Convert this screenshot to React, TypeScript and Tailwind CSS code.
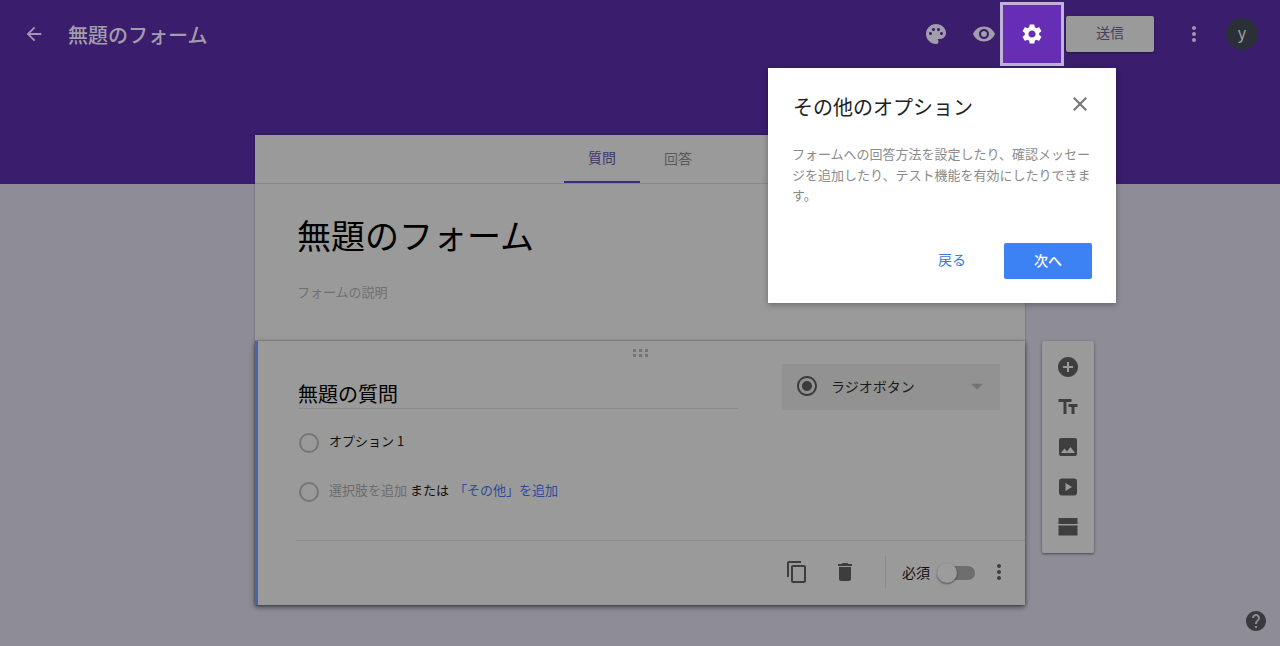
import {
  MdAddCircle,
  MdArrowBack,
  MdArrowDropDown,
  MdClose,
  MdContentCopy,
  MdDelete,
  MdHelp,
  MdImage,
  MdMoreVert,
  MdPalette,
  MdRadioButtonChecked,
  MdRemoveRedEye,
  MdSettings,
  MdTextFields,
} from "react-icons/md";

const font = "font-['Noto_Sans_CJK_JP','Liberation_Sans',sans-serif]";

// 質問カードの選択肢の丸
const RadioCircle = () => (
  <span className="w-5 h-5 rounded-full border-2 border-[#767676] shrink-0" />
);

const DragDots = () => (
  <div className="grid grid-cols-3 gap-[2px] w-[16px] mx-auto -translate-x-px">
    {[0, 1, 2, 3, 4, 5].map((i) => (
      <span key={i} className="w-[3px] h-[3px] bg-[#757575]" />
    ))}
  </div>
);

// 動画アイコン（角丸＋再生マーク）
const VideoIcon = () => (
  <svg width="24" height="24" viewBox="0 0 24 24" fill="currentColor">
    <path fillRule="evenodd" d="M6 3.5h12a3 3 0 0 1 3 3v11a3 3 0 0 1-3 3H6a3 3 0 0 1-3-3v-11a3 3 0 0 1 3-3zM9.5 8v8l6.5-4z" />
  </svg>
);

// セクションアイコン
const SectionIcon = () => (
  <svg width="24" height="24" viewBox="0 0 24 24" fill="currentColor">
    <rect x="2.5" y="3" width="19" height="6" />
    <rect x="2.5" y="10.5" width="19" height="10" />
  </svg>
);

const TopBar = () => (
  <div className="h-[68px] flex items-center">
    <MdArrowBack size={22} className="ml-[23px] text-[#a396b4]" />
    <h1 className="ml-[23px] mt-[1px] text-[20px] font-medium text-[#a39cae] leading-none">無題のフォーム</h1>

    <div className="ml-auto flex items-center">
      <MdPalette size={24} className="text-[#a29cac]" />
      <MdRemoveRedEye size={24} className="ml-[24px] text-[#a29cac]" />
      <div className="ml-[4px] w-[64px] h-[64px] border-[3px] border-[#bfb3d6] bg-[#652eb4] flex items-center justify-center">
        <MdSettings size={24} className="text-white" />
      </div>
      <button className="ml-[2px] w-[88px] h-[36px] pb-[3px] bg-[#9a9a9a] rounded-[2px] text-[14px] text-[#45405a] shadow-[0_1px_2px_rgba(0,0,0,0.4)]">
        送信
      </button>
      <MdMoreVert size={24} className="ml-[28px] text-[#a396b4]" />
      <div className="ml-[20px] mr-[22px] w-8 h-8 pb-[5px] rounded-full bg-[#2b3038] text-[#a0a0a0] text-[16px] flex items-center justify-center">
        y
      </div>
    </div>
  </div>
);

const FormHeader = () => (
  <div className="h-[206px] shrink-0 border-b border-[#878787]">
    <div className="h-[49px] border-b border-[#888888] flex justify-center">
      <div className="w-[76px] h-[48px] pb-[2px] border-b-2 border-[#3f2a78] flex items-center justify-center text-[14px] text-[#40356e]">
        質問
      </div>
      <div className="w-[76px] h-[48px] pb-[2px] flex items-center justify-center text-[14px] text-[#5a5a5a]">
        回答
      </div>
    </div>
    <div className="pl-[42px] pt-[27px]">
      <h2 className="text-[34px] leading-[48px] text-black">無題のフォーム</h2>
      <p className="mt-[24px] text-[13px] leading-[18px] text-[#707070]">フォームの説明</p>
    </div>
  </div>
);

const QuestionCard = () => (
  <div className="h-[264px] border-l-[3px] border-[#4a64a8] shadow-[0_2px_5px_rgba(0,0,0,0.55)] flex flex-col">
    <div className="pt-[8px] h-[24px]">
      <DragDots />
    </div>
    <div className="pl-[40px] pr-[25px] flex items-start">
      <div className="w-[440px] mt-[15px] h-[29px] border-b border-[#8a8a8a] text-[20px] font-normal leading-[28px] text-black">
        無題の質問
      </div>
      <div className="ml-auto -mt-[1px] w-[218px] h-[46px] pb-[2px] bg-[#929292] flex items-center pl-[13px] pr-[9px]">
        <MdRadioButtonChecked size={24} className="text-[#3b3b3b]" />
        <span className="ml-[12px] text-[14px] text-[#1c1c1c]">ラジオボタン</span>
        <MdArrowDropDown size={28} className="ml-auto text-[#727272]" />
      </div>
    </div>
    <div className="pl-[41px] mt-[8px] h-[50px] flex items-center gap-[10px]">
      <RadioCircle />
      <span className="-mt-[4px] text-[13px] text-[#111]">オプション 1</span>
    </div>
    <div className="pl-[41px] h-[47px] flex items-center gap-[10px] text-[13px]">
      <RadioCircle />
      <span className="-mt-[4px] text-[#6c6c6c]">
        選択肢を追加 <span className="text-[#111]">または</span>
      </span>
      <span className="-mt-[4px] -ml-[5px] text-[#2d4a99]">「その他」を追加</span>
    </div>
    <div className="mt-auto ml-[38px] h-[65px] pb-[2px] border-t border-[#8a8a8a] flex items-center justify-end pr-[14px]">
      <MdContentCopy size={24} className="text-[#3d3d3d]" />
      <MdDelete size={24} className="ml-[24px] text-[#3d3d3d]" />
      <span className="ml-[28px] w-px h-[32px] bg-[#8a8a8a]" />
      <span className="ml-[16px] text-[14px] text-[#111]">必須</span>
      <div className="ml-[9px] relative w-[36px] h-[14px] mt-[2px] rounded-full bg-[#6e6e6e]">
        <span className="absolute -left-[2px] -top-[3px] w-5 h-5 rounded-full bg-[#9c9c9c] shadow-[0_1px_2px_rgba(0,0,0,0.5)]" />
      </div>
      <MdMoreVert size={24} className="ml-[12px] text-[#3d3d3d]" />
    </div>
  </div>
);

const SideToolbar = () => (
  <div className="ml-[17px] w-[52px] h-[212px] mt-[206px] bg-[#9a9a9a] rounded-[2px] shadow-[0_1px_3px_rgba(0,0,0,0.5)] flex flex-col items-center pt-[14px] gap-[16px] text-[#3e3e3e]">
    <MdAddCircle size={24} />
    <MdTextFields size={24} />
    <MdImage size={24} />
    <VideoIcon />
    <SectionIcon />
  </div>
);

const OptionsPopover = () => (
  <div className="absolute left-[768px] top-[68px] w-[348px] h-[235px] bg-white shadow-[0_2px_6px_rgba(0,0,0,0.3)]">
    <div className="flex items-center pl-[25px] pr-[24px] pt-[24px]">
      <h3 className="text-[20px] leading-[30px] text-[#222]">その他のオプション</h3>
      <MdClose size={24} className="ml-auto -mt-[6px] text-[#757575]" />
    </div>
    <p className="ml-[24px] mr-[24px] mt-[22px] text-[13px] leading-[20.5px] text-[#8a8a8a]">
      フォームへの回答方法を設定したり、確認メッセージを追加したり、テスト機能を有効にしたりできます。
    </p>
    <div className="absolute right-[24px] bottom-[24px] flex items-center">
      <button className="pb-[4px] text-[14px] text-[#3b78d8]">戻る</button>
      <button className="ml-[38px] w-[88px] h-[36px] pb-[2px] rounded-[2px] bg-[#3d82f4] text-[14px] font-medium text-white">
        次へ
      </button>
    </div>
  </div>
);

export default function App() {
  return (
    <div
      className={`relative w-[1280px] h-[646px] overflow-hidden bg-[linear-gradient(#3a1d6c_184px,#8e8c96_184px)] ${font}`}
    >
      <TopBar />
      <div className="mt-[67px] flex pl-[255px]">
        <div className="w-[770px] bg-[#9a9a9a] flex flex-col shadow-[0_0_2px_rgba(0,0,0,0.35)]">
          <FormHeader />
          <QuestionCard />
        </div>
        <SideToolbar />
      </div>
      <OptionsPopover />
      <MdHelp size={24} className="absolute right-[12px] bottom-[13px] text-[#3a3a3f]" />
    </div>
  );
}
